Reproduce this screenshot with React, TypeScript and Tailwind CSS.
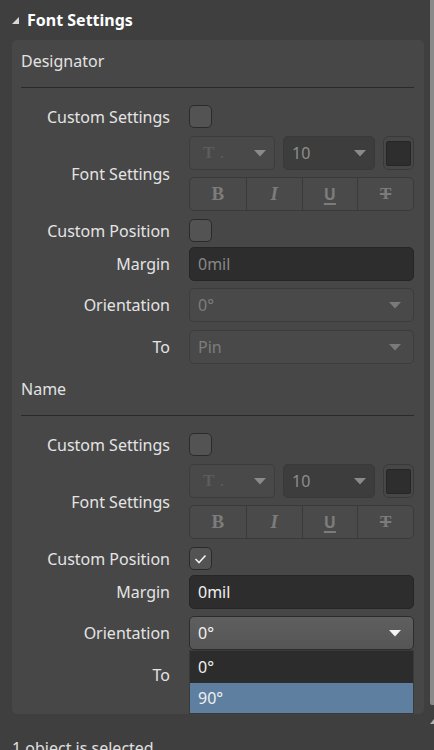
import React from "react";

const font = { fontFamily: '"Noto Sans", "Open Sans", sans-serif' };

function Arrow({ color }: { color: string }) {
  return (
    <svg width="12" height="7" viewBox="0 0 12 7" className="shrink-0">
      <path d="M0 0 L12 0 L6 6.5 Z" fill={color} />
    </svg>
  );
}

function Check({ checked = false }: { checked?: boolean }) {
  return (
    <div className="w-[23px] h-[23px] rounded-[5px] border border-[#2a2a2a] bg-[#535353] flex items-center justify-center">
      {checked && (
        <svg width="13" height="10" viewBox="0 0 13 10">
          <path d="M1.5 5 L5 8.5 L11.5 1.5" fill="none" stroke="#f0f0f0" strokeWidth="1.6" />
        </svg>
      )}
    </div>
  );
}

function Row({ label, children, className = "" }: { label: string; children: React.ReactNode; className?: string }) {
  return (
    <div className={"flex items-center " + className}>
      <div className="w-[149px] text-right text-[16px] text-[#e4e4e4] leading-5 shrink-0">{label}</div>
      <div className="ml-[19px] flex-1 min-w-0">{children}</div>
    </div>
  );
}

function Select({ value, active = false }: { value: string; active?: boolean }) {
  return (
    <div
      className={
        "h-[34px] rounded-[5px] border flex items-center justify-between pl-[8px] pr-[12px] text-[16px] " +
        (active
          ? "bg-gradient-to-b from-[#5f5f5f] to-[#555555] border-[#2c2c2c] text-[#f2f2f2]"
          : "bg-[#494949] border-[#3c3c3c] text-[#7d7d7d]")
      }
    >
      <span>{value}</span>
      <Arrow color={active ? "#f4f4f4" : "#7a7a7a"} />
    </div>
  );
}

function Input({ value, active = false }: { value: string; active?: boolean }) {
  return (
    <div
      className={
        "h-[34px] rounded-[5px] border border-[#262626] bg-[#2d2d2d] flex items-center pl-[8px] text-[16px] " +
        (active ? "text-[#f0f0f0]" : "text-[#888888]")
      }
    >
      {value}
    </div>
  );
}

function FontControls() {
  const serif = { fontFamily: '"Liberation Serif", "DejaVu Serif", serif' };
  return (
    <div className="flex flex-col gap-[7px]">
      <div className="flex gap-[8px] h-[34px]">
        <div className="w-[86px] rounded-[5px] border border-[#3c3c3c] bg-[#494949] flex items-center justify-between pl-[13px] pr-[8px]">
          <span className="text-[#5c5c5c] text-[17px] font-bold" style={serif}>
            T <span className="text-[13px] ml-[2px]">.</span>
          </span>
          <Arrow color="#8a8a8a" />
        </div>
        <div className="w-[92px] rounded-[5px] border border-[#393939] bg-[#3d3d3d] flex items-center justify-between pl-[8px] pr-[8px]">
          <span className="text-[#8e8e8e] text-[16px]">10</span>
          <Arrow color="#8a8a8a" />
        </div>
        <div className="flex-1 rounded-[6px] border border-[#393939] bg-[#474747] flex items-center justify-center">
          <div className="w-[25px] h-[25px] rounded-[2px] border border-[#262626] bg-[#2e2e2e]" />
        </div>
      </div>
      <div className="h-[34px] grid grid-cols-4 rounded-[5px] border border-[#3a3a3a] bg-[#4a4a4a] text-[#7c7c7c]">
        <div className="flex items-center justify-center text-[19px] font-bold" style={serif}>B</div>
        <div className="flex items-center justify-center text-[19px] font-bold italic border-l border-[#3a3a3a]" style={serif}>I</div>
        <div className="flex items-center justify-center border-l border-[#3a3a3a]">
          <span className="text-[16px] font-bold underline underline-offset-[3px] decoration-[2px]">U</span>
        </div>
        <div className="flex items-center justify-center border-l border-[#3a3a3a]">
          <span className="text-[17px] font-bold line-through decoration-[2px]" style={serif}>T</span>
        </div>
      </div>
    </div>
  );
}

function Section({ title, open = false }: { title: string; open?: boolean }) {
  return (
    <div>
      <div className="text-[16px] leading-5 text-[#e2e2e2]">{title}</div>
      <div className="mt-[16px] h-px bg-[#2a2a2a]" />
      <div className="mt-[17px] flex flex-col">
        <Row label="Custom Settings">
          <Check />
        </Row>
        <Row label="Font Settings" className="mt-[8px]">
          <FontControls />
        </Row>
        <Row label="Custom Position" className="mt-[8px]">
          <Check checked={open} />
        </Row>
        <Row label="Margin" className="mt-[5px]">
          <Input value="0mil" active={open} />
        </Row>
        <Row label="Orientation" className="mt-[7px]">
          <div className="relative">
            <Select value="0°" active={open} />
            {open && (
              <div className="absolute left-0 right-0 top-full z-10 border border-[#3a3a3a] bg-[#2c2c2c] text-[16px] text-[#f0f0f0]">
                <div className="h-[32px] flex items-center pl-[8px]">0°</div>
                <div className="h-[30px] flex items-center pl-[8px] bg-[#5e7f9f]">90°</div>
              </div>
            )}
          </div>
        </Row>
        <Row label="To" className="mt-[8px]">
          <Select value="Pin" />
        </Row>
      </div>
    </div>
  );
}

export default function App() {
  return (
    <div className="h-[750px] w-[434px] overflow-hidden bg-[#3f3f3f] flex" style={font}>
      <div className="flex-1 min-w-0">
        <div className="h-[40px] flex items-center pl-[12px]">
          <svg width="7" height="7" viewBox="0 0 7 7">
            <path d="M7 0 L7 7 L0 7 Z" fill="#d8d8d8" />
          </svg>
          <span className="ml-[8px] text-[16px] font-bold text-white">Font Settings</span>
        </div>
        <div className="ml-[12px] mr-[6px] rounded-[5px] bg-[#474747] pl-[9px] pr-[10px] pt-[11px] pb-[22px]">
          <Section title="Designator" />
          <div className="mt-[15px]">
            <Section title="Name" open />
          </div>
        </div>
        <div className="mt-[24px] pl-[12px] text-[16px] leading-5 text-[#e0e0e0]">1 object is selected</div>
      </div>
      <div className="w-[4px] flex flex-col">
        <div className="h-[705px] bg-[#8a8a8a] rounded-bl-[2px]" />
        <div className="mt-[14px] w-0 h-0 border-l-[4px] border-l-transparent border-b-[5px] border-b-[#b0b0b0]" />
      </div>
    </div>
  );
}
